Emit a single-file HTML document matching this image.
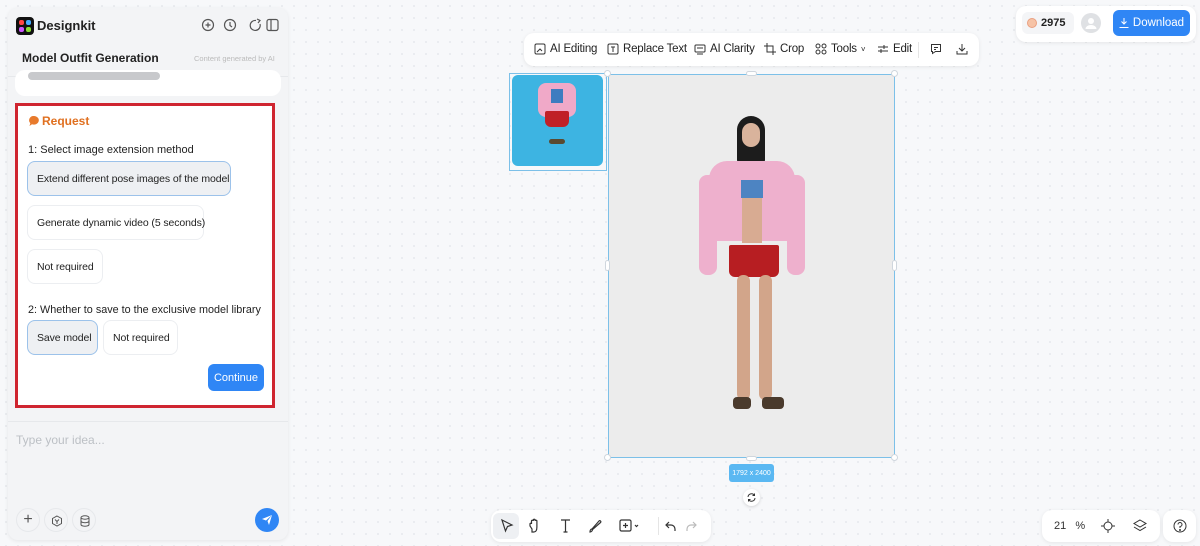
<!DOCTYPE html>
<html><head><meta charset="utf-8"><style>
*{box-sizing:border-box;margin:0;padding:0}
body{width:1200px;height:546px;overflow:hidden;font-family:"Liberation Sans",sans-serif;background:#f7f8fa;background-image:radial-gradient(#e6e8ec 1px,transparent 1px);background-size:12px 12px;position:relative;color:#222}
.abs{position:absolute}
.panel{left:8px;top:8px;width:280px;height:532px;background:#f3f4f6;border-radius:10px;box-shadow:0 1px 4px rgba(0,0,0,.08);overflow:hidden}
.btn{position:absolute;background:#fff;border:1px solid #eceef1;border-radius:8px;font-size:10.5px;color:#222;display:flex;align-items:center;padding-left:9px;white-space:nowrap;letter-spacing:-0.1px}
.sel{background:#eef0f3;border:1px solid #9cc2ea}
.card{background:#fff;border-radius:10px;box-shadow:0 1px 4px rgba(0,0,0,.08)}
.tb{font-size:11.5px;color:#222;display:flex;align-items:center;gap:4px;position:absolute;top:43px;white-space:nowrap;letter-spacing:-0.2px}
svg{display:block}
.h{position:absolute;width:7px;height:7px;background:#fff;border:1px solid #cfd6dd;border-radius:50%}
</style></head><body>
<div class="abs panel">
  <div class="abs" style="left:8px;top:9px;width:18px;height:18px;background:#111;border-radius:4px">
    <div class="abs" style="left:3px;top:3px;width:5px;height:5px;background:#f44;border-radius:2px"></div>
    <div class="abs" style="left:10px;top:3px;width:5px;height:5px;background:#4af;border-radius:2px"></div>
    <div class="abs" style="left:3px;top:10px;width:5px;height:5px;background:#c5f;border-radius:2px"></div>
    <div class="abs" style="left:10px;top:10px;width:5px;height:5px;background:#8d3;border-radius:2px"></div>
  </div>
  <div class="abs" style="left:29px;top:10px;font-size:13px;font-weight:bold">Designkit</div>
  <svg class="abs" style="left:193px;top:10px" width="80" height="14" fill="none" stroke="#555" stroke-width="1.2">
    <circle cx="7" cy="7" r="5.5"/><path d="M7 4.5v5M4.5 7h5"/>
    <circle cx="29" cy="7" r="5.5"/><path d="M29 4v3.5l2 1.5"/>
    <path d="M55 2.5a5 5 0 1 0 4 3.5"/><path d="M56 1l3 1.5-2 2.5"/>
    <rect x="66" y="1.5" width="11" height="11" rx="2"/><path d="M70 1.5v11"/>
  </svg>
  <div class="abs" style="left:14px;top:43px;font-size:12px;font-weight:bold">Model Outfit Generation</div>
  <div class="abs" style="left:186px;top:46px;font-size:7.5px;color:#bbb">Content generated by AI</div>
  <div class="abs" style="left:0;top:68px;width:280px;height:1px;background:#e6e8eb"></div>
  <div class="abs" style="left:7px;top:62px;width:266px;height:26px;background:#fff;border-radius:10px"></div>
  <div class="abs" style="left:20px;top:64px;width:132px;height:8px;background:#c8c9cc;border-radius:4px"></div>
  <div class="abs" style="left:7px;top:95px;width:260px;height:305px;background:#fff;border:3px solid #cf2530"></div>
  <svg class="abs" style="left:20px;top:107px" width="12" height="12"><path d="M6 1a5 4.3 0 1 1-2 8.3L1.5 11l.8-2.8A4.3 4.3 0 0 1 6 1z" fill="#e87a2c"/></svg>
  <div class="abs" style="left:34px;top:106px;font-size:12px;font-weight:bold;color:#e07020">Request</div>
  <div class="abs" style="left:20px;top:136px;font-size:11px">1: Select image extension method</div>
  <div class="btn sel" style="left:19px;top:153px;width:204px;height:35px">Extend different pose images of the model</div>
  <div class="btn" style="left:19px;top:197px;width:177px;height:35px">Generate dynamic video (5 seconds)</div>
  <div class="btn" style="left:19px;top:241px;width:76px;height:35px">Not required</div>
  <div class="abs" style="left:20px;top:296px;font-size:10.8px;white-space:nowrap">2: Whether to save to the exclusive model library</div>
  <div class="btn sel" style="left:19px;top:312px;width:71px;height:35px">Save model</div>
  <div class="btn" style="left:95px;top:312px;width:75px;height:35px">Not required</div>
  <div class="abs" style="left:200px;top:356px;width:56px;height:27px;background:#2f86f5;border-radius:6px;color:#fff;font-size:11px;display:flex;align-items:center;justify-content:center">Continue</div>
  <div class="abs" style="left:0;top:413px;width:280px;height:1px;background:#e6e8eb"></div>
  <div class="abs" style="left:8px;top:425px;font-size:12px;color:#bcc0c5">Type your idea...</div>
  <div class="abs" style="left:8px;top:500px;width:24px;height:24px;border-radius:50%;border:1px solid #e6e8eb;display:flex;align-items:center;justify-content:center;color:#555;font-size:16px">+</div>
  <div class="abs" style="left:36px;top:500px;width:24px;height:24px;border-radius:50%;border:1px solid #e6e8eb"><svg style="margin:6px" width="12" height="12" fill="none" stroke="#555"><path d="M6 1l4.5 2.5v5L6 11 1.5 8.5v-5z"/><path d="M4 4.5l2 2 2-2M6 6.5V9"/></svg></div>
  <div class="abs" style="left:64px;top:500px;width:24px;height:24px;border-radius:50%;border:1px solid #e6e8eb"><svg style="margin:6px" width="12" height="12" fill="none" stroke="#555"><ellipse cx="6" cy="2.5" rx="4" ry="1.7"/><path d="M2 2.5v7c0 1 1.8 1.7 4 1.7s4-.7 4-1.7v-7M2 6c0 1 1.8 1.7 4 1.7S10 7 10 6"/></svg></div>
  <div class="abs" style="left:247px;top:500px;width:24px;height:24px;border-radius:50%;background:#2f86f5"><svg style="margin:6px" width="12" height="12"><path d="M11 1L1 5l4 1.5L11 1 6.5 7 8 11z" fill="#fff"/></svg></div>
</div>

<div class="abs card" style="left:524px;top:33px;width:455px;height:33px"></div>
<div class="tb" style="left:534px"><svg width="12" height="12" fill="none" stroke="#333"><rect x="1" y="1" width="10" height="10" rx="1.5"/><path d="M3 9l3-3 2 2"/></svg>AI Editing</div>
<div class="tb" style="left:607px"><svg width="12" height="12" fill="none" stroke="#333"><rect x="1" y="1" width="10" height="10" rx="1.5"/><path d="M4 4h4M6 4v5"/></svg>Replace Text</div>
<div class="tb" style="left:694px"><svg width="12" height="12" fill="none" stroke="#333"><rect x="1" y="2" width="10" height="7" rx="1"/><path d="M3 5h6M3 11h6"/></svg>AI Clarity</div>
<div class="tb" style="left:764px"><svg width="12" height="12" fill="none" stroke="#333"><path d="M3 0v9h9M0 3h9v9"/></svg>Crop</div>
<div class="tb" style="left:815px"><svg width="12" height="12" fill="none" stroke="#333"><circle cx="3" cy="3" r="2"/><circle cx="9" cy="3" r="2"/><circle cx="3" cy="9" r="2"/><circle cx="9" cy="9" r="2"/></svg>Tools<span style="font-size:8px">˅</span></div>
<div class="tb" style="left:877px"><svg width="12" height="12" fill="none" stroke="#333"><path d="M1 4h10M1 8h10"/><path d="M7 2v4M4 6v4"/></svg>Edit</div>
<div class="abs" style="left:918px;top:42px;width:1px;height:16px;background:#e5e5e5"></div>
<svg class="abs" style="left:930px;top:43px" width="12" height="12" fill="none" stroke="#333"><path d="M1.5 1.5h9v7h-5l-3 2v-2h-1z"/><path d="M4 4.5h4M4 6.5h2"/></svg>
<svg class="abs" style="left:956px;top:43px" width="12" height="12" fill="none" stroke="#333"><path d="M6 1v7M3 5l3 3 3-3M1 8v3h10V8"/></svg>

<div class="abs card" style="left:1016px;top:6px;width:180px;height:36px"></div>
<div class="abs" style="left:1022px;top:12px;width:52px;height:22px;background:#f4f5f7;border-radius:6px"></div>
<div class="abs" style="left:1027px;top:18px;width:10px;height:10px;border-radius:50%;background:#f6c3a6;border:1px solid #eaa080"></div>
<div class="abs" style="left:1041px;top:17px;font-size:11px;font-weight:bold">2975</div>
<div class="abs" style="left:1081px;top:13px;width:20px;height:20px;border-radius:50%;background:#dfe1e4"><svg width="20" height="20"><circle cx="10" cy="8" r="3" fill="#fff"/><path d="M4.5 16a5.5 4 0 0 1 11 0" fill="#fff"/></svg></div>
<div class="abs" style="left:1113px;top:10px;width:77px;height:26px;background:#2f86f5;border-radius:6px;color:#fff;font-size:11.5px;display:flex;align-items:center;justify-content:center;gap:4px"><svg width="10" height="10" fill="none" stroke="#fff"><path d="M5 0v6M2.5 3.5L5 6l2.5-2.5M0.5 9.5h9"/></svg>Download</div>

<!-- thumbnail -->
<div class="abs" style="left:509px;top:73px;width:98px;height:98px;border:1px solid #7cc0e8"></div>
<div class="abs" style="left:512px;top:75px;width:91px;height:91px;background:#3db4e2;border-radius:6px">
  <div class="abs" style="left:26px;top:8px;width:38px;height:34px;background:#f0a9c8;border-radius:8px"></div>
  <div class="abs" style="left:39px;top:14px;width:12px;height:14px;background:#3e7cc0"></div>
  <div class="abs" style="left:33px;top:36px;width:24px;height:16px;background:#c02028;border-radius:2px 2px 6px 6px"></div>
  <div class="abs" style="left:37px;top:64px;width:16px;height:5px;background:#5a4a30;border-radius:3px"></div>
</div>

<!-- main image -->
<div class="abs" style="left:608px;top:74px;width:287px;height:384px;background:#ececec;border:1px solid #7cc0e8;overflow:hidden">
  <div class="abs" style="left:128px;top:41px;width:28px;height:48px;background:#1c1c1c;border-radius:14px 14px 4px 4px"></div>
  <div class="abs" style="left:133px;top:48px;width:18px;height:24px;background:#d9b39c;border-radius:9px"></div>
  <div class="abs" style="left:100px;top:86px;width:86px;height:80px;background:#eeb0cd;border-radius:18px 18px 6px 6px"></div>
  <div class="abs" style="left:90px;top:100px;width:18px;height:100px;background:#eeb0cd;border-radius:8px"></div>
  <div class="abs" style="left:178px;top:100px;width:18px;height:100px;background:#eeb0cd;border-radius:8px"></div>
  <div class="abs" style="left:132px;top:105px;width:22px;height:18px;background:#4d84c2"></div>
  <div class="abs" style="left:133px;top:123px;width:20px;height:45px;background:#d8ab92"></div>
  <div class="abs" style="left:120px;top:170px;width:50px;height:32px;background:#b71e22;border-radius:2px 2px 6px 6px"></div>
  <div class="abs" style="left:128px;top:200px;width:13px;height:125px;background:#d2a58a;border-radius:6px"></div>
  <div class="abs" style="left:150px;top:200px;width:13px;height:125px;background:#d2a58a;border-radius:6px"></div>
  <div class="abs" style="left:124px;top:322px;width:18px;height:12px;background:#4a3a2c;border-radius:4px"></div>
  <div class="abs" style="left:153px;top:322px;width:22px;height:12px;background:#4a3a2c;border-radius:4px"></div>
</div>
<div class="h" style="left:604px;top:70px"></div><div class="h" style="left:891px;top:70px"></div>
<div class="h" style="left:604px;top:454px"></div><div class="h" style="left:891px;top:454px"></div>
<div class="abs" style="left:746px;top:71px;width:11px;height:5px;background:#fff;border:1px solid #cfd6dd;border-radius:3px"></div>
<div class="abs" style="left:746px;top:456px;width:11px;height:5px;background:#fff;border:1px solid #cfd6dd;border-radius:3px"></div>
<div class="abs" style="left:605px;top:260px;width:5px;height:11px;background:#fff;border:1px solid #cfd6dd;border-radius:3px"></div>
<div class="abs" style="left:892px;top:260px;width:5px;height:11px;background:#fff;border:1px solid #cfd6dd;border-radius:3px"></div>
<div class="abs" style="left:729px;top:464px;width:45px;height:18px;background:#5ab8f2;border-radius:3px;color:#fff;font-size:7px;display:flex;align-items:center;justify-content:center">1792 x 2400</div>
<div class="abs" style="left:743px;top:489px;width:17px;height:17px;border-radius:50%;background:#fff;box-shadow:0 1px 3px rgba(0,0,0,.15)"><svg style="margin:4px" width="9" height="9" fill="none" stroke="#333"><path d="M1 4a3.5 3.5 0 0 1 6.5-1.5M8 5a3.5 3.5 0 0 1-6.5 1.5M7.5 0.5v2h-2M1.5 8.5v-2h2"/></svg></div>

<!-- bottom toolbar -->
<div class="abs card" style="left:491px;top:510px;width:220px;height:32px"></div>
<div class="abs" style="left:493px;top:513px;width:26px;height:26px;background:#eef0f3;border-radius:6px"></div>
<svg class="abs" style="left:498px;top:517px" width="200" height="18" fill="none" stroke="#333" stroke-width="1.2">
  <path d="M4 3l10 5-4.5 1.5L7.5 14z"/>
  <path d="M34 15v-3l-2-3v-2c0-1 1.5-1 1.5 0V4c0-1 1.8-1 1.8 0V3c0-1 1.8-1 1.8 0v1c0-1 1.8-1 1.8 0v6c0 3-1 5-3 5z"/>
  <path d="M63 3h9M67.5 3v12M65.5 15h4"/>
  <path d="M92 15c0-2 1-3 2-3l7-8c1-1 2.5.5 1.5 1.5l-8 7c0 1-1 2.5-2.5 2.5z"/>
  <rect x="122" y="3" width="11" height="11" rx="1.5"/><path d="M127.5 6v5M125 8.5h5"/><path d="M137 8l1.5 1.5L140 8"/>
  <path d="M171 5l-3 3 3 3M168 8h5a4 4 0 0 1 4 4v2"/>
  <path d="M195 5l3 3-3 3M198 8h-5a4 4 0 0 0-4 4v2" stroke="#bbb"/>
</svg>
<div class="abs" style="left:658px;top:517px;width:1px;height:18px;background:#e5e5e5"></div>

<div class="abs card" style="left:1042px;top:510px;width:118px;height:32px"></div>
<div class="abs" style="left:1054px;top:520px;font-size:11px;color:#333">21&nbsp;&nbsp;&nbsp;%</div>
<svg class="abs" style="left:1101px;top:519px" width="14" height="14" fill="none" stroke="#333"><circle cx="7" cy="7" r="4"/><path d="M7 0v3M7 11v3M0 7h3M11 7h3"/></svg>
<svg class="abs" style="left:1133px;top:519px" width="14" height="14" fill="none" stroke="#333"><path d="M7 1l6 3.5-6 3.5-6-3.5z"/><path d="M1 8l6 3.5L13 8"/></svg>
<div class="abs card" style="left:1163px;top:510px;width:33px;height:32px"></div>
<svg class="abs" style="left:1173px;top:519px" width="14" height="14" fill="none" stroke="#333"><circle cx="7" cy="7" r="6"/><path d="M5 5.5a2 2 0 1 1 2 2v1.5"/><circle cx="7" cy="11" r=".5" fill="#333"/></svg>
</body></html>
